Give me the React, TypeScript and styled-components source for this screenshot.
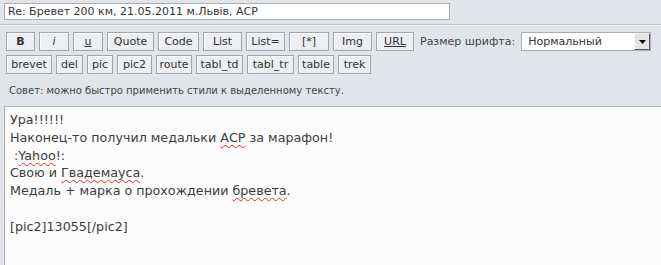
import React from "react";
import styled, { createGlobalStyle } from "styled-components";

const Global = createGlobalStyle`
  html, body { margin: 0; padding: 0; height: 100%; overflow: hidden; }
  body { background: #e1e4e8; font-family: "DejaVu Sans", Verdana, sans-serif; }
  #root { height: 100%; }
`;

const Page = styled.div`
  display: flex;
  flex-direction: column;
  height: 100%;
`;

const SubjectBar = styled.div`
  padding: 3px 0 0 4px;
  height: 21px;
  box-sizing: border-box;
`;

const SubjectInput = styled.div`
  width: 446px;
  height: 17px;
  box-sizing: border-box;
  background: #fff;
  border: 1px solid #a9afb5;
  font-size: 11px;
  line-height: 15px;
  color: #333;
  padding-left: 3px;
  white-space: nowrap;
`;

const Divider = styled.div`
  margin-top: 3px;
  height: 1px;
  background: #c3c8cd;
  border-bottom: 1px solid #eceef0;
`;

const Toolbar = styled.div`
  display: flex;
  flex-direction: column;
  gap: 4px;
  padding: 6px 0 0 6px;
`;

const Row = styled.div`
  display: flex;
  align-items: center;
  gap: 4px;
  height: 19px;
`;

const Btn = styled.div<{ $w: number; $b?: boolean; $i?: boolean; $u?: boolean }>`
  width: ${(p) => p.$w}px;
  height: 19px;
  box-sizing: border-box;
  display: flex;
  align-items: center;
  justify-content: center;
  background: #eceef1;
  border: 1px solid #a2a7ac;
  box-shadow: inset 1px 1px 0 #fafbfc;
  font-size: 11px;
  color: #333;
  font-weight: ${(p) => (p.$b ? "bold" : "normal")};
  font-style: ${(p) => (p.$i ? "italic" : "normal")};
  text-decoration: ${(p) => (p.$u ? "underline" : "none")};
`;

const Label = styled.span`
  margin-left: 2px;
  font-size: 11px;
  color: #444;
  white-space: nowrap;
`;

const Select = styled.div`
  margin-left: 2px;
  width: 130px;
  height: 19px;
  box-sizing: border-box;
  background: #fff;
  border: 1px solid #a9afb5;
  display: flex;
  align-items: center;
  justify-content: space-between;
  font-size: 11px;
  color: #333;
  padding-left: 6px;
`;

const Arrow = styled.div`
  width: 16px;
  height: 17px;
  box-sizing: border-box;
  background: #e4e4e4;
  border: 1px solid;
  border-color: #f4f4f4 #5e5e5e #5e5e5e #f4f4f4;
  display: flex;
  align-items: center;
  justify-content: center;
`;

const Tip = styled.div`
  margin-top: 10px;
  padding-left: 9px;
  font-size: 10px;
  line-height: 13px;
  color: #444;
  white-space: nowrap;
`;

const Editor = styled.div`
  flex: 1;
  margin: 9px 0 0 4px;
  background: #fcfcfc;
  border-top: 1px solid #b0b5ba;
  border-left: 1px solid #a9afb5;
  padding: 4px 0 0 5px;
  font-size: 12.7px;
  line-height: 17.8px;
  color: #3c3c3c;
`;

const Line = styled.div`
  min-height: 17.8px;
  white-space: pre;
`;

const Spell = styled.span`
  text-decoration: underline wavy #e0302a;
  text-decoration-thickness: 1px;
  text-underline-offset: 2px;
`;

const row1: { t: string; w: number; b?: boolean; i?: boolean; u?: boolean }[] = [
  { t: "B", w: 29, b: true },
  { t: "i", w: 30, i: true },
  { t: "u", w: 30, u: true },
  { t: "Quote", w: 47 },
  { t: "Code", w: 41 },
  { t: "List", w: 39 },
  { t: "List=", w: 39 },
  { t: "[*]", w: 40 },
  { t: "Img", w: 39 },
  { t: "URL", w: 38, u: true },
];

const row2: { t: string; w: number }[] = [
  { t: "brevet", w: 46 },
  { t: "del", w: 27 },
  { t: "pic", w: 26 },
  { t: "pic2", w: 35 },
  { t: "route", w: 36 },
  { t: "tabl_td", w: 47 },
  { t: "tabl_tr", w: 47 },
  { t: "table", w: 36 },
  { t: "trek", w: 33 },
];

export default function App() {
  return (
    <Page>
      <Global />
      <SubjectBar>
        <SubjectInput>Re: Бревет 200 км, 21.05.2011 м.Львів, АСР</SubjectInput>
      </SubjectBar>
      <Divider />
      <Toolbar>
        <Row>
          {row1.map((b) => (
            <Btn key={b.t} $w={b.w} $b={b.b} $i={b.i} $u={b.u}>
              {b.t}
            </Btn>
          ))}
          <Label>Размер шрифта:</Label>
          <Select>
            Нормальный
            <Arrow>
              <svg width="7" height="4" viewBox="0 0 7 4">
                <path d="M0 0h7L3.5 4z" fill="#000" />
              </svg>
            </Arrow>
          </Select>
        </Row>
        <Row>
          {row2.map((b) => (
            <Btn key={b.t} $w={b.w}>
              {b.t}
            </Btn>
          ))}
        </Row>
      </Toolbar>
      <Tip>Совет: можно быстро применить стили к выделенному тексту.</Tip>
      <Editor>
        <Line>Ура!!!!!!</Line>
        <Line>
          Наконец-то получил медальки <Spell>АСР</Spell> за марафон!
        </Line>
        <Line>
          {" :"}
          <Spell>Yahoo</Spell>!:
        </Line>
        <Line>
          Свою и <Spell>Гвадемауса</Spell>.
        </Line>
        <Line>
          Медаль + марка о прохождении <Spell>бревета</Spell>.
        </Line>
        <Line> </Line>
        <Line>[pic2]13055[/pic2]</Line>
      </Editor>
    </Page>
  );
}
